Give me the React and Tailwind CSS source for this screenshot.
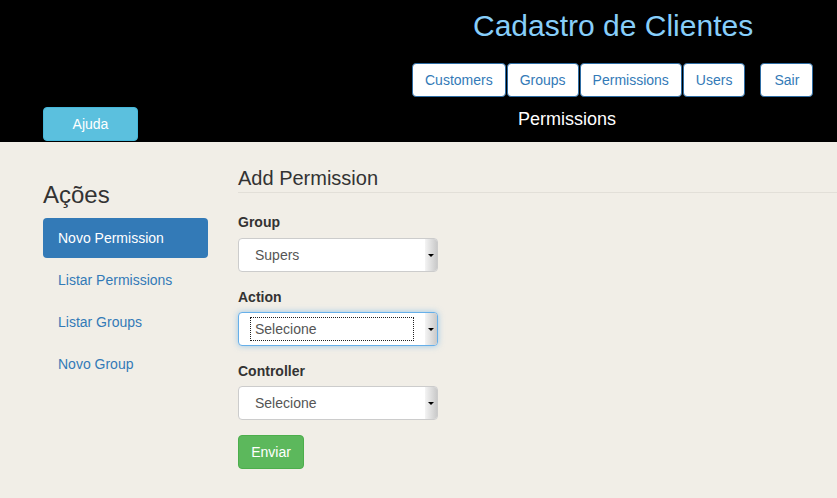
import { useState } from "react";

const navItems = ["Customers", "Groups", "Permissions", "Users"];
const sideLinks = ["Listar Permissions", "Listar Groups", "Novo Group"];

function FakeSelect({ value, focused }) {
  return (
    <div
      className={`w-[200px] h-[34px] bg-white rounded-[4px] border flex items-center ${
        focused ? "border-[#66afe9] shadow-[0_0_6px_rgba(102,175,233,0.6)]" : "border-[#cccccc]"
      }`}
    >
      <div className="flex-1 pl-[12px] pr-[12px]">
        <span
          className={`block pl-[4px] py-[1px] text-[14px] text-[#555] leading-[20px] ${
            focused ? "outline-1 outline-dotted outline-[#222]" : ""
          }`}
        >
          {value}
        </span>
      </div>
      <div className="w-[12px] h-[32px] bg-gradient-to-r from-[#f4f4f4] to-[#c9c9c9] flex items-center justify-center rounded-r-[3px]">
        <span className="w-0 h-0 border-l-[3px] border-r-[3px] border-t-[3px] border-l-transparent border-r-transparent border-t-black" />
      </div>
    </div>
  );
}

export default function App() {
  const [active] = useState("Permissions");

  return (
    <div className="min-h-[498px] bg-[#f1eee7] font-['Liberation_Sans',Arial,sans-serif] text-[#333]">
      {/* Header */}
      <div className="bg-black h-[142px]">
        <h1 className="pl-[473px] pt-[6px] text-[30px] leading-[40px] text-[#87cefa]">Cadastro de Clientes</h1>
        <div className="flex pl-[412px] mt-[17px] gap-[1px]">
          {navItems.map((n) => (
            <button
              key={n}
              className="h-[34px] px-[12px] bg-white border border-[#2e6da4] rounded-[4px] text-[14px] text-[#337ab7]"
            >
              {n}
            </button>
          ))}
          <button className="ml-[14px] h-[34px] px-[13px] bg-white border border-[#2e6da4] rounded-[4px] text-[14px] text-[#337ab7]">
            Sair
          </button>
        </div>
        <div className="flex items-start mt-[10px]">
          <button className="ml-[43px] w-[95px] h-[34px] bg-[#5bc0de] border border-[#46b8da] rounded-[4px] text-[14px] text-white">
            Ajuda
          </button>
          <span className="ml-[380px] text-[18px] leading-[24px] text-white">{active}</span>
        </div>
      </div>

      {/* Body */}
      <div className="flex pt-[34px]">
        <div className="w-[238px] shrink-0 pl-[43px]">
          <h2 className="text-[24px] leading-[30px] mt-[4px] mb-[8px]">Ações</h2>
          <div className="w-[165px] h-[40px] bg-[#337ab7] rounded-[4px] flex items-center pl-[15px] text-[14px] text-white">
            Novo Permission
          </div>
          <div className="mt-[1px]">
            {sideLinks.map((l) => (
              <div key={l} className="h-[42px] flex items-center pl-[15px] text-[14px] text-[#337ab7]">
                {l}
              </div>
            ))}
          </div>
        </div>

        <div className="flex-1">
          <div className="border-b border-[#e2dfd8] pb-[3px]">
            <h3 className="text-[20px] leading-[22px] mt-[-9px]">Add Permission</h3>
          </div>
          <div className="mt-[19px] text-[14px]">
            <label className="block font-bold leading-[20px]">Group</label>
            <div className="mt-[6px]">
              <FakeSelect value="Supers" />
            </div>
            <label className="block font-bold leading-[20px] mt-[15px]">Action</label>
            <div className="mt-[5px]">
              <FakeSelect value="Selecione" focused />
            </div>
            <label className="block font-bold leading-[20px] mt-[15px]">Controller</label>
            <div className="mt-[5px]">
              <FakeSelect value="Selecione" />
            </div>
            <button className="mt-[15px] w-[66px] h-[34px] bg-[#5cb85c] border border-[#4cae4c] rounded-[4px] text-[14px] text-white">
              Enviar
            </button>
          </div>
        </div>
      </div>
    </div>
  );
}
